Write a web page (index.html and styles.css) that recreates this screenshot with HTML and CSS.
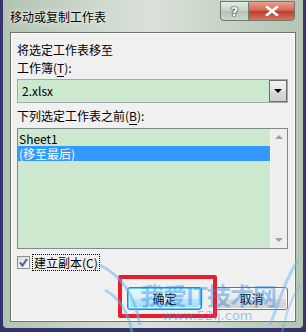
FILE: index.html
```html
<!DOCTYPE html>
<html lang="zh-CN">
<head>
    <meta charset="UTF-8">
    <title>移动或复制工作表</title>
    <link rel="stylesheet" href="styles.css">
</head>
<body>
<div class="frame">
    <div class="titlebar">
        <span class="title">移动或复制工作表</span>
        <div class="caption">
            <span class="cbut help">?</span>
            <span class="cbut close">
                <svg width="14" height="10" viewBox="0 0 14 10"><path d="M2 1 L12 9 M12 1 L2 9" stroke="#fff" stroke-width="2.6" stroke-linecap="square"/></svg>
            </span>
        </div>
    </div>
    <div class="client">
        <div class="label first">将选定工作表移至</div>
        <div class="label">工作簿(<u>T</u>):</div>
        <div class="combo">
            <span class="combo-text">2.xlsx</span>
            <span class="drop">
                <svg width="8" height="5" viewBox="0 0 8 5"><path d="M0 0 H8 L4 4 Z" fill="#000"/></svg>
            </span>
        </div>
        <div class="label third">下列选定工作表之前(<u>B</u>):</div>
        <div class="list">
            <div class="items">
                <div class="item">Sheet1</div>
                <div class="item selected">(移至最后)</div>
            </div>
            <div class="scroll">
                <svg width="8" height="5" viewBox="0 0 8 5"><path d="M0 4 H8 L4 0 Z" fill="#a0a0a0"/></svg>
                <svg width="8" height="5" viewBox="0 0 8 5"><path d="M0 0 H8 L4 4 Z" fill="#a0a0a0"/></svg>
            </div>
        </div>
        <div class="check-row">
            <span class="checkbox">
                <svg width="11" height="11" viewBox="0 0 11 11"><path d="M2 5.5 L4.5 8.5 L9 2" stroke="#4c61a0" stroke-width="2" fill="none"/></svg>
            </span>
            <span class="check-label">建立副本(<u>C</u>)</span>
        </div>
        <div class="buttons">
            <span class="btn default">确定</span>
            <span class="btn">取消</span>
        </div>
    </div>
    <div class="mark-box"></div>
    <div class="watermark">
        <svg class="wings" width="306" height="80" viewBox="0 0 306 80">
            <path d="M100 10 C120 20 135 40 140 70" stroke="#69b4ec" stroke-width="3" fill="none" opacity="0.55"/>
            <path d="M105 35 C118 42 128 55 132 78" stroke="#69b4ec" stroke-width="3" fill="none" opacity="0.5"/>
            <path d="M298 5 C285 25 280 45 270 70" stroke="#69b4ec" stroke-width="3" fill="none" opacity="0.5"/>
            <path d="M300 30 C290 45 286 60 282 78" stroke="#69b4ec" stroke-width="2" fill="none" opacity="0.45"/>
        </svg>
        <span class="wm-big">我爱IT技术网</span>
        <span class="wm-small">www.52ij.com</span>
    </div>
</div>
</body>
</html>
```
FILE: styles.css
```css
*{
    margin: 0;
    padding: 0;
    box-sizing: border-box;
}
body{
    width: 306px;
    height: 332px;
    background: #35336b;
    font-family: "Noto Sans CJK SC", "DejaVu Sans", sans-serif;
    font-size: 12px;
    color: #000;
    overflow: hidden;
}
.frame{
    position: relative;
    width: 300px;
    height: 328px;
    margin-left: 3px;
    padding: 0 7px 6px 7px;
    background: linear-gradient(90deg, #b2c3b1 0%, #cdd8cc 30%, #dbe2d9 50%, #c6d3c5 75%, #b4c5b3 100%);
    border-radius: 0 0 4px 4px;
}
.titlebar{
    height: 32px;
    display: flex;
    justify-content: space-between;
    align-items: flex-start;
}
.title{
    margin-top: 8px;
    line-height: 18px;
    text-shadow: 0 0 6px #f4f7f2, 0 0 3px #f4f7f2;
}
.caption{
    display: flex;
    margin-top: 1px;
    margin-right: 1px;
}
.cbut{
    height: 20px;
    display: flex;
    align-items: center;
    justify-content: center;
    border: 1px solid #6f7a70;
}
.help{
    width: 28px;
    border-radius: 0 0 0 4px;
    border-right: none;
    background: linear-gradient(#e4ebe3, #c5d1c4 50%, #b4c3b3 51%, #cbd7ca);
    color: #fff;
    font-family: "DejaVu Sans", sans-serif;
    font-weight: bold;
    font-size: 13px;
    text-shadow: 0 0 1px #333, 0 0 1px #333, 0 0 2px #333;
}
.close{
    width: 47px;
    border-radius: 0 0 4px 0;
    background: linear-gradient(#e7a08f, #d2624f 50%, #be3a27 51%, #d5775f);
}
.client{
    height: 290px;
    background: #f0f0f0;
    border: 1px solid #6b756c;
    box-shadow: inset 0 0 0 1px #fbfcfb;
    padding: 0 7px 0 6px;
    display: flex;
    flex-direction: column;
}
.label{
    line-height: 16px;
    height: 16px;
}
.label u{
    text-decoration: none;
    border-bottom: 1px solid #000;
    line-height: 12px;
}
.first{
    margin-top: 9px;
    margin-bottom: 2px;
}
.combo{
    margin-top: 3px;
    height: 24px;
    display: flex;
    background: #cce8cf;
    border: 1px solid #a3a8ab;
}
.combo-text{
    flex: 1;
    padding-left: 4px;
    line-height: 22px;
}
.drop{
    width: 18px;
    display: flex;
    align-items: center;
    justify-content: center;
    border: 1px solid #707070;
    background: linear-gradient(#f2f2f2, #e6e6e6 50%, #d9d9d9 51%, #cfcfcf);
}
.third{
    margin-top: 5px;
}
.list{
    margin-top: 4px;
    height: 121px;
    display: flex;
    border: 1px solid #82878c;
    background: #cce8cf;
}
.items{
    flex: 1;
    padding-top: 2px;
}
.item{
    height: 15px;
    line-height: 15px;
    padding-left: 1px;
}
.selected{
    background: #3399ff;
    color: #fff;
}
.scroll{
    width: 17px;
    background: #eeeeee;
    border-left: 1px solid #f6f6f6;
    display: flex;
    flex-direction: column;
    justify-content: space-between;
    align-items: center;
    padding: 6px 0 5px 0;
}
.check-row{
    margin-top: 5px;
    height: 17px;
    display: flex;
    align-items: center;
}
.checkbox{
    width: 13px;
    height: 13px;
    border: 1px solid #8e8f8f;
    background: linear-gradient(135deg, #dcdcdc, #fbfbfb);
    display: flex;
    align-items: center;
    justify-content: center;
}
.check-label{
    margin-left: 2px;
    padding: 0 1px;
    line-height: 15px;
    border: 1px dotted #000;
}
.check-label u{
    text-decoration: none;
}
.buttons{
    margin-top: 16px;
    display: flex;
    justify-content: flex-end;
    gap: 13px;
}
.btn{
    width: 73px;
    height: 23px;
    line-height: 21px;
    text-align: center;
    border: 1px solid #707070;
    border-radius: 3px;
    background: linear-gradient(#f2f2f2, #ebebeb 50%, #dddddd 51%, #cfcfcf);
    box-shadow: inset 0 0 0 1px #fcfcfc;
}
.btn.default{
    width: 75px;
    border-color: #3c7fb1;
    background: linear-gradient(#eaf6fd, #d9f0fc 50%, #bee6fd 51%, #a7d9f5);
    box-shadow: inset 0 0 0 1px #5ccbf5, inset 0 0 0 2px #e0f4fd;
}
.mark-box{
    position: absolute;
    left: 115px;
    top: 275px;
    width: 99px;
    height: 43px;
    border: 4px solid #e81f2a;
    border-radius: 2px;
}
.watermark{
    position: absolute;
    left: -3px;
    top: 255px;
    width: 306px;
    height: 77px;
    pointer-events: none;
}
.wings{
    position: absolute;
    left: 0;
    top: 0;
}
.wm-big{
    position: absolute;
    left: 140px;
    top: 26px;
    font-size: 24px;
    font-weight: bold;
    letter-spacing: -1px;
    color: rgba(40, 140, 230, 0.45);
    line-height: 28px;
}
.wm-small{
    position: absolute;
    left: 162px;
    top: 54px;
    font-family: "DejaVu Sans", sans-serif;
    font-size: 13px;
    color: rgba(40, 140, 230, 0.45);
    line-height: 14px;
}
```
